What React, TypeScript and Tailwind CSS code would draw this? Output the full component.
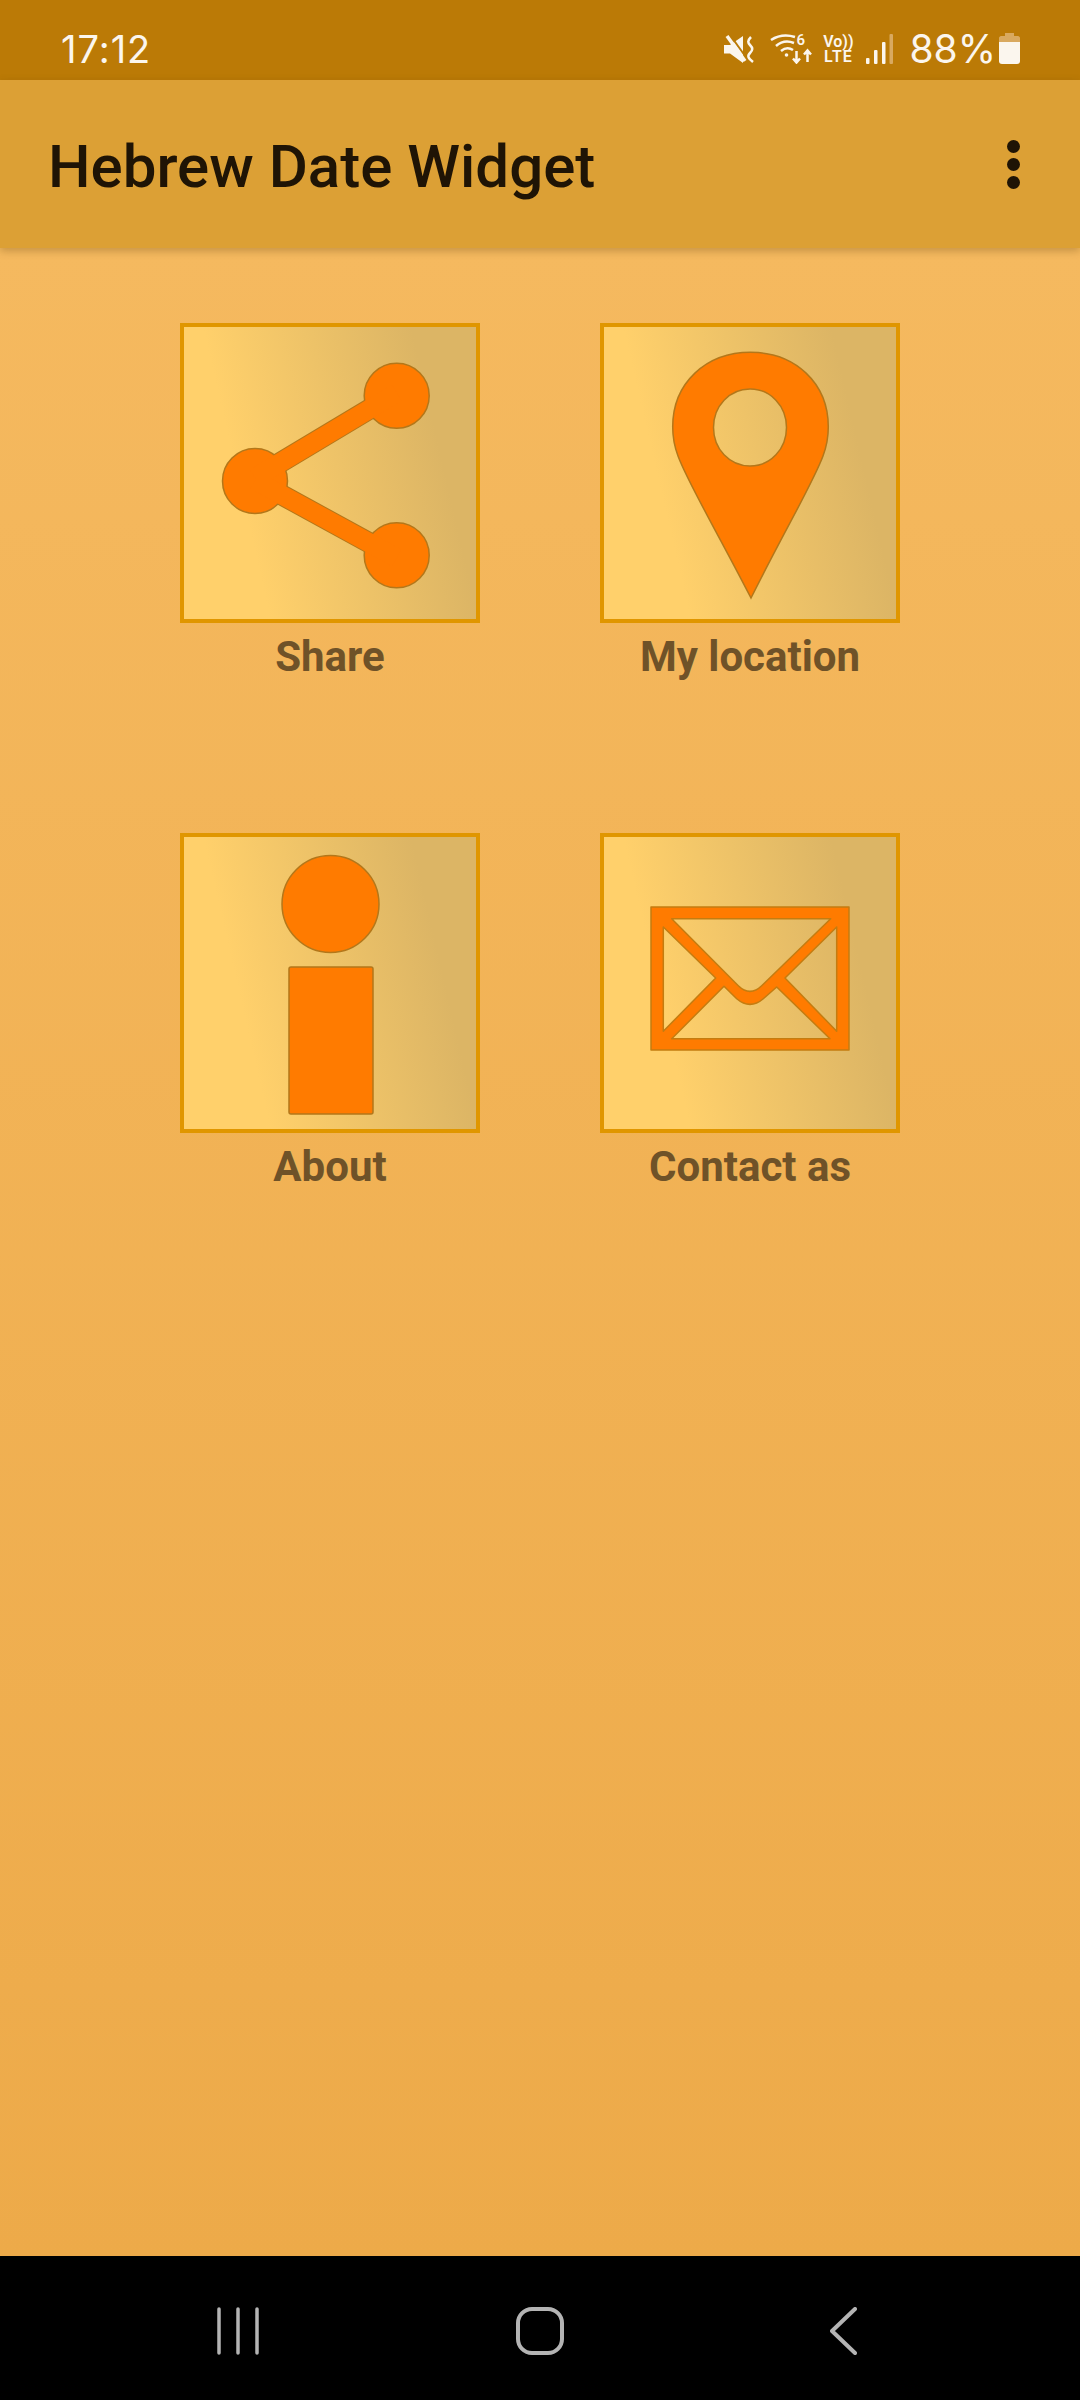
const outline = "#b3771a";
const orange = "#ff7b00";

function ShareIcon() {
  const bands = "M75 154.800L216.700 69.800M75 157.300L216.700 234.800";
  return (
    <svg viewBox="0 0 292 292" className="h-full w-full blur-[0.5px]">
      <g transform="translate(-4 -4)">
        <path d={bands} fill="none" stroke={outline} strokeWidth="21" />
        <g fill={orange} stroke={outline} strokeWidth="1.500">
          <circle cx="75" cy="158" r="32.500" />
          <circle cx="216.700" cy="72.700" r="32.500" />
          <circle cx="216.700" cy="232.300" r="32.500" />
        </g>
        <path d={bands} fill="none" stroke={orange} strokeWidth="19" />
      </g>
    </svg>
  );
}

function PinIcon() {
  return (
    <svg viewBox="0 0 292 292" className="h-full w-full blur-[0.5px]">
      <g transform="translate(-4 -4)">
        <path
          fillRule="evenodd"
          fill={orange}
          stroke={outline}
          strokeWidth="1.500"
          d="M150.500 29.300C106 29.300 72.700 60 72.700 104C72.700 115 75 125 78 133C88 160 115 205 151 275C186 205 213 160 223 133C226 125 228.300 115 228.300 104C228.300 60 195 29.300 150.500 29.300ZM150 66C170.500 66 186.500 83 186.500 104.500C186.500 126 170.500 143 150 143C129.500 143 113.500 126 113.500 104.500C113.500 83 129.500 66 150 66Z"
        />
      </g>
    </svg>
  );
}

function InfoIcon() {
  return (
    <svg viewBox="0 0 292 292" className="h-full w-full blur-[0.5px]">
      <g transform="translate(-4 -4)" fill={orange} stroke={outline} strokeWidth="1.500">
        <circle cx="150.500" cy="71" r="48.500" />
        <rect x="109" y="134" width="84" height="147" rx="2" />
      </g>
    </svg>
  );
}

function MailIcon() {
  return (
    <svg viewBox="0 0 292 292" className="h-full w-full blur-[0.5px]">
      <g transform="translate(-4 -4)">
        <path
          fillRule="evenodd"
          fill={orange}
          stroke="#c47c10"
          strokeWidth="1.500"
          strokeLinejoin="round"
          d="M51 74H249V217H51ZM71.700 85.700L138.300 152.700Q150 164 161.700 152.700L230.700 85.700ZM63.300 94V198.300L115.700 145ZM236.700 94L185 145L236.700 198.300ZM71.700 205.700H230L176.700 154L163.300 165.700Q150 177 136.700 165.700L124 153.300Z"
        />
      </g>
    </svg>
  );
}

function Tile({ label, icon }: { label: string; icon: React.ReactNode }) {
  return (
    <div className="flex flex-col items-center">
      <div className="h-[300px] w-[300px] border-4 border-[#e09600] bg-[linear-gradient(77deg,#ffd06b_24%,#dcb565_82%)]">
        {icon}
      </div>
      <p className="mt-[10px] text-[42px] font-bold leading-[48px] text-[#6f5228]">{label}</p>
    </div>
  );
}

function StatusIcons() {
  return (
    <div className="flex items-center text-[#fbf6ee]">
      <svg viewBox="0 0 30 28" className="h-[28px] w-[30px]">
        <path d="M0 10H6L19 1V28L6 18.500H0Z" fill="currentColor" />
        <path d="M6 0L24 25" stroke="#bb7a06" strokeWidth="2" />
        <path d="M3 1L21 26" stroke="currentColor" strokeWidth="3.500" />
        <path d="M27 2C23 6 24 8 26 10C29 13 29 15 26 18C23 21 24 23 29 27" fill="none" stroke="currentColor" strokeWidth="2.500" />
      </svg>
      <div className="relative ml-[15px] h-[30px] w-[44px]">
        <svg viewBox="0 0 44 30" className="h-[30px] w-[44px]">
          <g fill="none" stroke="currentColor" strokeWidth="2.500">
            <path d="M2 6Q13 -1 26 3" />
            <path d="M7 12Q15 5 25 9" />
            <path d="M12 17Q18 12 24 16" />
          </g>
          <circle cx="17.500" cy="21" r="1.800" fill="currentColor" />
          <path d="M27.500 17V28M24 24.500L27.500 28.500L31 24.500M38.500 28V17M35 20.500L38.500 16.500L42 20.500" fill="none" stroke="currentColor" strokeWidth="2.500" />
        </svg>
        <span className="absolute left-[27px] top-0 text-[15px] font-semibold leading-[13px]">6</span>
      </div>
      <div className="ml-[10px] flex w-[30px] flex-col items-center text-[16px] font-semibold leading-[15px]">
        <span>Vo))</span>
        <span className="tracking-[1px]">LTE</span>
      </div>
      <svg viewBox="0 0 27 30" className="ml-[13px] h-[30px] w-[27px]">
        <rect x="0" y="24" width="3.500" height="6" rx="1" fill="currentColor" />
        <rect x="8" y="16" width="3.500" height="14" rx="1" fill="currentColor" />
        <rect x="16" y="8" width="3.500" height="22" rx="1" fill="currentColor" />
        <rect x="23.500" y="0" width="3.500" height="30" rx="1" fill="#d9a95f" />
      </svg>
      <span className="ml-[16px] font-['Inter',sans-serif] text-[39px] font-normal leading-none">88%</span>
      <svg viewBox="0 0 21 31" className="ml-[3px] h-[31px] w-[21px]">
        <path d="M6 0H15V3H19C20 3 21 4 21 5V9H0V5C0 4 1 3 2 3H6Z" fill="#d9a95f" />
        <path d="M0 9H21V28C21 30 20 31 18 31H3C1 31 0 30 0 28Z" fill="currentColor" />
      </svg>
    </div>
  );
}

export default function App() {
  return (
    <div className="flex h-[2400px] w-[1080px] flex-col bg-black font-['Roboto',sans-serif]">
      <div className="flex h-[80px] items-center justify-between bg-[#bb7a06] pl-[61px] pr-[60px] pt-[17px]">
        <span className="font-['Inter',sans-serif] text-[38px] font-normal leading-none tracking-[1px] text-[#fbf6ee]">17:12</span>
        <StatusIcons />
      </div>

      <header className="relative z-10 flex h-[168px] items-center justify-between bg-[#dca035] pl-[48px] pr-[60px] shadow-[0_3px_8px_rgba(90,60,10,0.3)]">
        <h1 className="mt-[5px] text-[60px] font-medium leading-none text-[#1f1405]">Hebrew Date Widget</h1>
        <div className="flex flex-col gap-[5px]">
          <span className="h-[13px] w-[13px] rounded-full bg-[#1f1405]" />
          <span className="h-[13px] w-[13px] rounded-full bg-[#1f1405]" />
          <span className="h-[13px] w-[13px] rounded-full bg-[#1f1405]" />
        </div>
      </header>

      <main className="flex-1 bg-[linear-gradient(180deg,#f5b95f,#edaa49)] pt-[75px]">
        <div className="ml-[180px] grid grid-cols-[300px_300px] gap-x-[120px] gap-y-[152px]">
          <Tile label="Share" icon={<ShareIcon />} />
          <Tile label="My location" icon={<PinIcon />} />
          <Tile label="About" icon={<InfoIcon />} />
          <Tile label="Contact as" icon={<MailIcon />} />
        </div>
      </main>

      <nav className="flex h-[144px] items-center pl-[217px] pt-[6px] text-[#b4b4b4]">
        <svg viewBox="0 0 42 48" className="h-[48px] w-[42px]">
          <path d="M2 2V46M21 2V46M40 2V46" fill="none" stroke="currentColor" strokeWidth="3.500" strokeLinecap="round" />
        </svg>
        <svg viewBox="0 0 48 48" className="ml-[257px] h-[48px] w-[48px]">
          <rect x="2" y="2" width="44" height="44" rx="14" fill="none" stroke="currentColor" strokeWidth="4" />
        </svg>
        <svg viewBox="0 0 27 48" className="ml-[266px] h-[48px] w-[27px]">
          <path d="M25 2L2 24L25 46" fill="none" stroke="currentColor" strokeWidth="4" strokeLinecap="round" strokeLinejoin="round" />
        </svg>
      </nav>
    </div>
  );
}
